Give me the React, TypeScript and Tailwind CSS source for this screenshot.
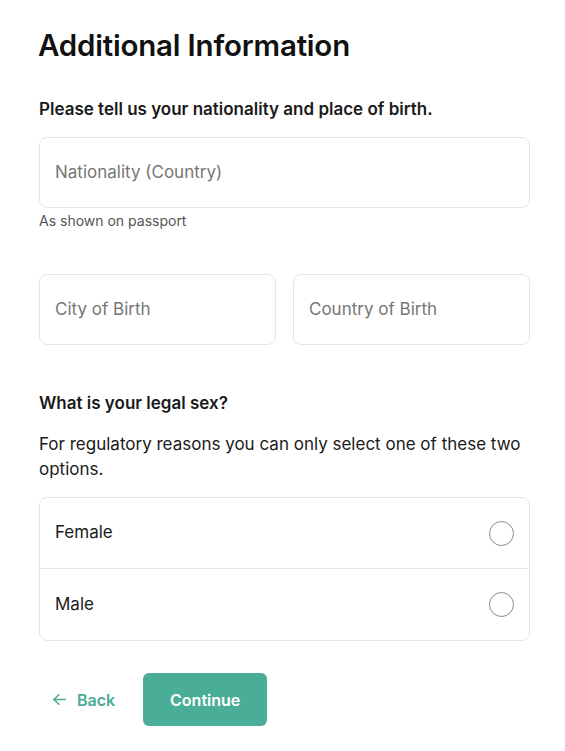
const font = { fontFamily: 'Inter, "Liberation Sans", sans-serif' };

function Field({ placeholder }: { readonly placeholder: string }) {
  return (
    <div className="flex h-[71px] items-center rounded-lg border border-[#e6e6e6] bg-white px-[15px]">
      <span className="text-[17px] text-[#767676]">{placeholder}</span>
    </div>
  );
}

function RadioRow({ label, last = false }: { readonly label: string; readonly last?: boolean }) {
  return (
    <div
      className={`flex h-[71px] items-center justify-between px-[15px] ${
        last ? '' : 'border-b border-[#e6e6e6]'
      }`}
    >
      <span className="text-[17px] text-[#1a1a1a]">{label}</span>
      <span className="h-[25px] w-[25px] rounded-full border border-[#8a8a8a]" />
    </div>
  );
}

export default function App() {
  return (
    <div className="min-h-screen bg-white text-[#111]" style={font}>
      <div className="w-[491px] ml-[39px] pt-[25px]">
        <h1 className="-ml-[1px] text-[29.5px] font-semibold leading-[40px] tracking-[-0.2px] text-[#111]">
          Additional Information
        </h1>

        <p className="mt-[32px] text-[17px] font-semibold leading-[24px] text-[#1a1a1a]">
          Please tell us your nationality and place of birth.
        </p>

        <div className="mt-[16px]">
          <Field placeholder="Nationality (Country)" />
          <p className="mt-[3px] text-[14px] leading-[20px] text-[#555]">As shown on passport</p>
        </div>

        <div className="mt-[43px] grid grid-cols-2 gap-[17px]">
          <Field placeholder="City of Birth" />
          <Field placeholder="Country of Birth" />
        </div>

        <p className="mt-[46px] text-[17px] font-semibold leading-[24px] text-[#1a1a1a]">
          What is your legal sex?
        </p>
        <p className="mt-[17px] text-[17px] leading-[25px] text-[#1a1a1a]">
          For regulatory reasons you can only select one of these two options.
        </p>

        <div className="mt-[15px] rounded-lg border border-[#e6e6e6] bg-white">
          <RadioRow label="Female" />
          <RadioRow label="Male" last />
        </div>

        <div className="mt-[32px] flex items-center">
          <button className="flex items-center gap-[11px] pl-[14px] pr-[14px] text-[16px] font-semibold text-[#4aab95]">
            <svg width="13" height="11" viewBox="0 0 13 11" fill="none" stroke="currentColor" strokeWidth="1.6" strokeLinecap="round" strokeLinejoin="round">
              <path d="M12.2 5.5H1" />
              <path d="M5.8 0.8L1 5.5l4.8 4.7" />
            </svg>
            Back
          </button>
          <button className="ml-[14px] h-[53px] w-[124px] rounded-md bg-[#4aad97] text-[16px] font-semibold text-white">
            Continue
          </button>
        </div>
      </div>
    </div>
  );
}
